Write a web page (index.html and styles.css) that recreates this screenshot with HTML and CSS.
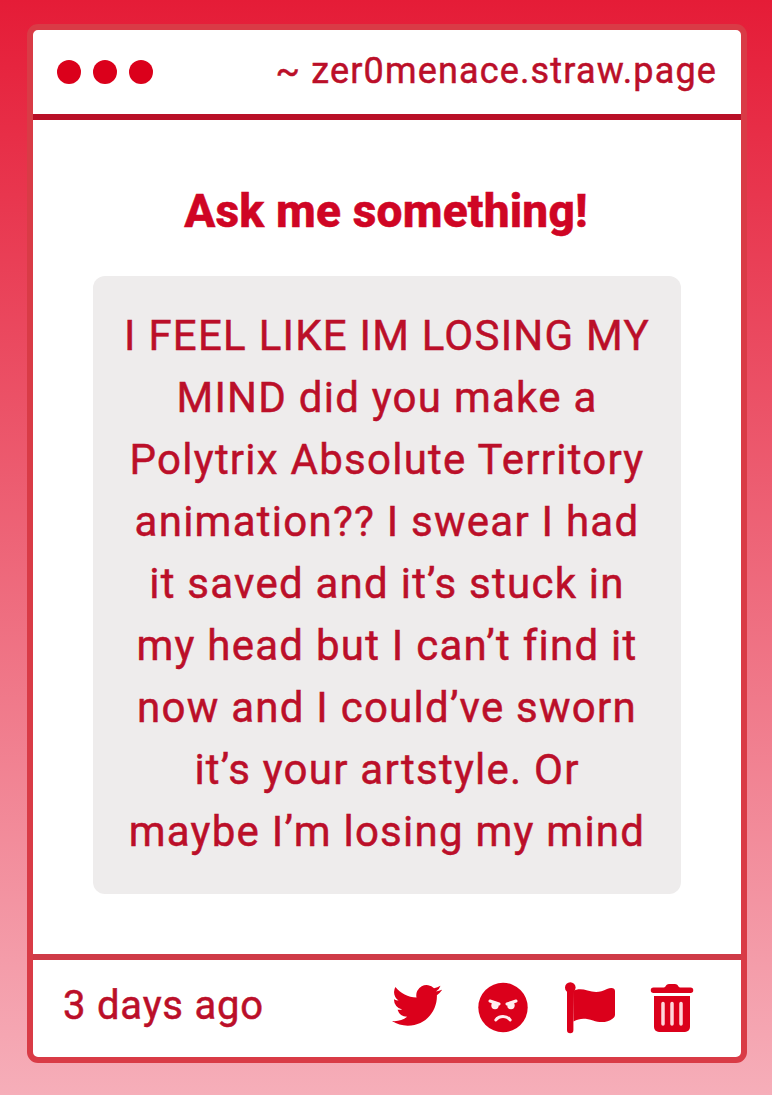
FILE: index.html
```html
<!DOCTYPE html>
<html lang="en">
<head>
<meta charset="UTF-8">
<meta name="viewport" content="width=device-width, initial-scale=1.0">
<title>Ask me something!</title>
<link rel="stylesheet" href="styles.css">
</head>
<body>
<div class="card">
    <header class="top">
        <div class="dots"><span></span><span></span><span></span></div>
        <div class="site">~ zer0menace.straw.page</div>
    </header>

    <main class="content">
        <h1>Ask me something!</h1>
        <p class="question">
            I FEEL LIKE IM LOSING MY<br>
            MIND did you make a<br>
            Polytrix Absolute Territory<br>
            animation?? I swear I had<br>
            it saved and it’s stuck in<br>
            my head but I can’t find it<br>
            now and I could’ve sworn<br>
            it’s your artstyle. Or<br>
            maybe I’m losing my mind
        </p>
    </main>

    <footer class="bottom">
        <div class="time">3 days ago</div>
        <div class="icons">
            <svg width="50" height="50" viewBox="0 0.8 24 24"><path d="M23.953 4.57a10 10 0 01-2.825.775 4.958 4.958 0 002.163-2.723c-.951.555-2.005.959-3.127 1.184a4.92 4.92 0 00-8.384 4.482C7.69 8.095 4.067 6.13 1.64 3.162a4.822 4.822 0 00-.666 2.475c0 1.71.87 3.213 2.188 4.096a4.904 4.904 0 01-2.228-.616v.06a4.923 4.923 0 003.946 4.827 4.996 4.996 0 01-2.212.085 4.936 4.936 0 004.604 3.417 9.867 9.867 0 01-6.102 2.105c-.39 0-.779-.023-1.17-.067a13.995 13.995 0 007.557 2.209c9.053 0 13.998-7.496 13.998-13.985 0-.21 0-.42-.015-.63A9.935 9.935 0 0024 4.59z"/></svg>
            <svg width="50" height="50" viewBox="0 0 50 50">
                <circle cx="25" cy="25.5" r="24.7"/>
                <g class="face">
                    <circle cx="17" cy="23.5" r="3.7"/>
                    <circle cx="33" cy="23.5" r="3.7"/>
                    <path d="M12 19l9 3M38 19l-9 3M17.8 38c3.2-4.8 11.2-4.8 14.4 0"/>
                </g>
            </svg>
            <svg width="50" height="50" viewBox="0 0 50 50">
                <circle cx="6.3" cy="5.5" r="5.3"/>
                <path d="M3 5h6.400v43a3.200 3.200 0 0 1-6.400 0z"/>
                <path d="M9 9c4.500-2.500 9.500-2 14.500-.5 7 2.200 13 2 19.500-1.400 4-2 8-1.500 8 2V32.500c0 2-.8 3-2.500 4.200-5 4-12.500 4.300-19.500 1.800-7-2.300-13-2.800-19.500 1z"/>
            </svg>
            <svg width="44" height="50" viewBox="0 -1 44 50">
                <path d="M3.500 4.500H14c1.500 0 2-3.500 5-3.500h6c3 0 3.500 3.500 5 3.500h10.500a2.700 2.700 0 0 1 0 5.500h-37a2.700 2.700 0 0 1 0-5.500z"/>
                <path d="M4 13h36v31a5 5 0 0 1-5 5H9a5 5 0 0 1-5-5z"/>
                <path class="slits" d="M13 20.500v20.500M22 20.500v20.500M31 20.500v20.500"/>
            </svg>
        </div>
    </footer>
</div>
</body>
</html>
```
FILE: styles.css
```css
* {
    box-sizing: border-box;
}
body {
    margin: 0;
    padding: 24px 25px 32px 27px;
    height: 1095px;
    background: linear-gradient(#e51c37, #f6aeb9);
    font-family: Roboto, "Liberation Sans", sans-serif;
    color: #bb0f29;
    -webkit-text-stroke: 0.5px;
}
.card {
    display: flex;
    flex-direction: column;
    height: 1039px;
    border: 6px solid #d93b46;
    border-radius: 11px;
    background-color: #ffffff;
}
.top {
    display: flex;
    justify-content: space-between;
    align-items: center;
    height: 90px;
    padding: 0 24px;
    border-bottom: 6px solid #b90f27;
}
.dots {
    display: flex;
    gap: 12px;
}
.dots span {
    width: 24px;
    height: 24px;
    border-radius: 50%;
    background-color: #db001b;
}
.site {
    padding-bottom: 2px;
    font-size: 36px;
    letter-spacing: 1.15px;
}
.content {
    flex: 1;
    padding: 60px;
}
h1 {
    margin: 0 0 34px;
    padding-right: 2px;
    font-size: 46px;
    font-weight: 800;
    line-height: 62px;
    letter-spacing: 0.2px;
    text-align: center;
    color: #cf0524;
}
.question {
    margin: 0;
    padding: 29px 0 31px;
    border-radius: 12px;
    background-color: #eeecec;
    font-size: 42px;
    line-height: 62px;
    letter-spacing: 1.25px;
    text-align: center;
    white-space: nowrap;
}
.bottom {
    display: flex;
    justify-content: space-between;
    align-items: center;
    height: 103px;
    padding: 0 47px 3px 30px;
    border-top: 6px solid #cf3b47;
}
.time {
    padding-bottom: 3px;
    font-size: 40px;
    letter-spacing: 0.8px;
}
.icons {
    display: flex;
    gap: 36px;
}
.icons svg {
    display: block;
    overflow: visible;
    fill: #db001b;
}
.icons .face {
    fill: #ffeef0;
}
.icons .face path {
    fill: none;
    stroke: #ffeef0;
    stroke-width: 3;
    stroke-linecap: round;
}
.icons .slits {
    stroke: #ffd5da;
    stroke-width: 3.5;
    stroke-linecap: round;
}
```
